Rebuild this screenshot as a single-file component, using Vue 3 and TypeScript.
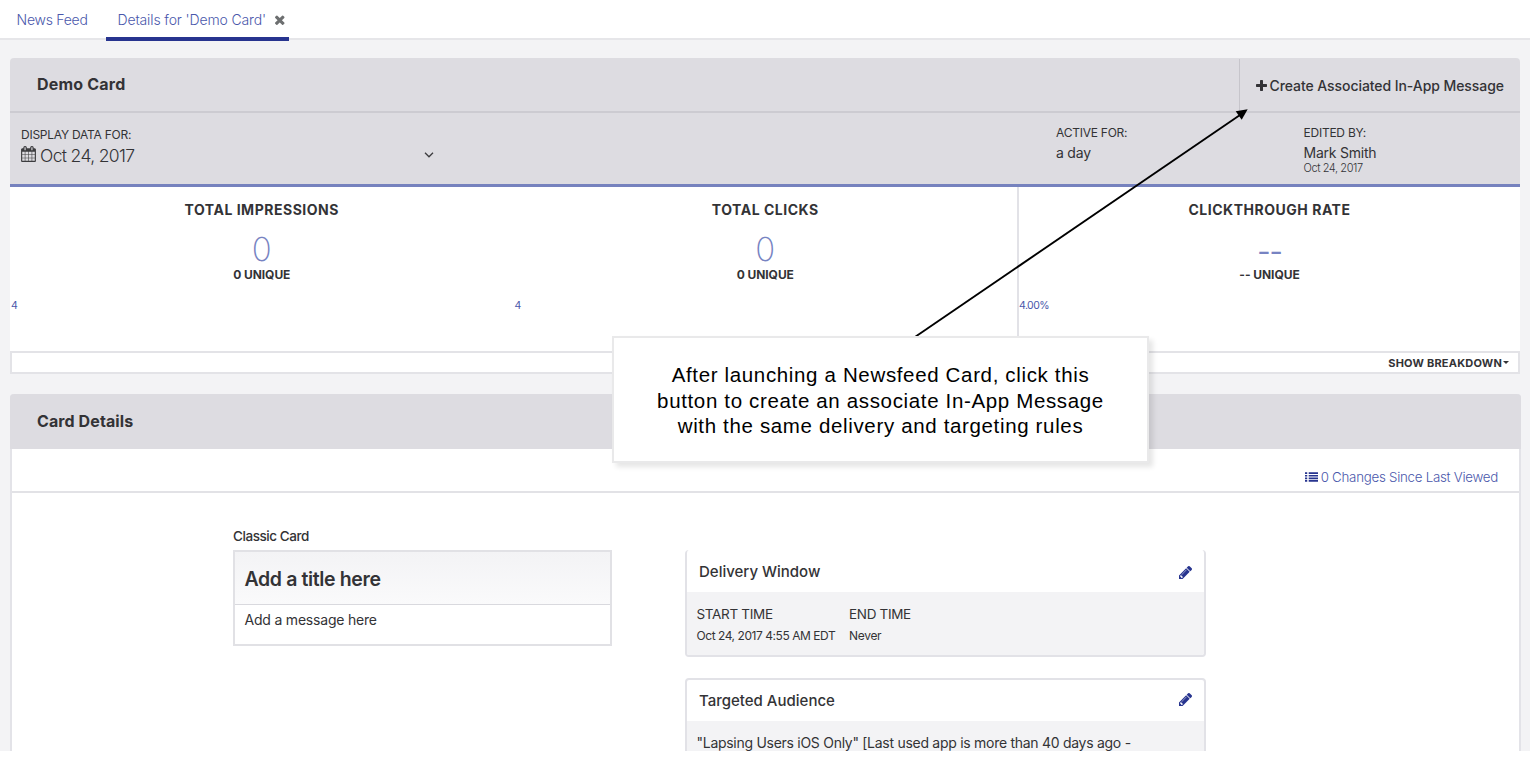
<script setup lang="ts">
interface Metric {
  title: string
  value: string
  unique: string
  axis: string
  cls: string
}

const metrics: Metric[] = [
  { title: 'TOTAL IMPRESSIONS', value: '0', unique: '0 UNIQUE', axis: '4', cls: 'impressions' },
  { title: 'TOTAL CLICKS', value: '0', unique: '0 UNIQUE', axis: '4', cls: 'clicks' },
  { title: 'CLICKTHROUGH RATE', value: '--', unique: '-- UNIQUE', axis: '4.00%', cls: 'rate' },
]

const calloutLines: string[] = [
  'After launching a Newsfeed Card, click this',
  'button to create an associate In-App Message',
  'with the same delivery and targeting rules',
]

const pencil =
  'M491 1536l91-91-235-235-91 91v107h128v128h107zm523-928q0-22-22-22-10 0-17 7l-542 542q-7 7-7 17 0 22 22 22 10 0 17-7l542-542q7-7 7-17zm-54-192l416 416-832 832h-416v-416zm683 96q0 53-37 90l-166 166-416-416 166-165q36-38 90-38 53 0 91 38l235 234q37 39 37 91z'
</script>

<template>
  <div class="page">
    <nav class="tabs">
      <a class="tab first">News Feed</a>
      <a class="tab active">
        <span>Details for 'Demo Card'</span>
        <svg class="close" viewBox="302 302 1188 1188"><path d="M1490 1322q0 40-28 68l-136 136q-28 28-68 28t-68-28l-294-294-294 294q-28 28-68 28t-68-28l-136-136q-28-28-28-68t28-68l294-294-294-294q-28-28-28-68t28-68l136-136q28-28 68-28t68 28l294 294 294-294q28-28 68-28t68 28l136 136q28 28 28 68t-28 68l-294 294 294 294q28 28 28 68z" /></svg>
      </a>
    </nav>

    <section class="panel">
      <header class="panel-head">
        <h1>Demo Card</h1>
        <button class="create">
          <svg viewBox="192 128 1408 1408"><path d="M1600 736v192q0 40-28 68t-68 28h-416v416q0 40-28 68t-68 28h-192q-40 0-68-28t-28-68v-416h-416q-40 0-68-28t-28-68v-192q0-40 28-68t68-28h416v-416q0-40 28-68t68-28h192q40 0 68 28t28 68v416h416q40 0 68 28t28 68z" /></svg>
          <span>Create Associated In-App Message</span>
        </button>
      </header>
      <div class="filters">
        <div class="range">
          <div class="label">DISPLAY DATA FOR:</div>
          <div class="range-row">
            <svg class="calendar" viewBox="64 0 1664 1792"><path d="M192 1664h288v-288h-288v288zm352 0h320v-288h-320v288zm-352-352h288v-320h-288v320zm352 0h320v-320h-320v320zm-352-384h288v-288h-288v288zm736 736h320v-288h-320v288zm-384-736h320v-288h-320v288zm768 736h288v-288h-288v288zm-384-352h320v-320h-320v320zm-352-864v-288q0-13-9.5-22.5t-22.5-9.5h-64q-13 0-22.5 9.5t-9.5 22.5v288q0 13 9.5 22.5t22.5 9.5h64q13 0 22.5-9.5t9.5-22.5zm736 864h288v-320h-288v320zm-384-384h320v-288h-320v288zm384 0h288v-288h-288v288zm32-480v-288q0-13-9.5-22.5t-22.5-9.5h-64q-13 0-22.5 9.5t-9.5 22.5v288q0 13 9.5 22.5t22.5 9.5h64q13 0 22.5-9.5t9.5-22.5zm384-64v1280q0 52-38 90t-90 38h-1408q-52 0-90-38t-38-90v-1280q0-52 38-90t90-38h128v-96q0-66 47-113t113-47h64q66 0 113 47t47 113v96h384v-96q0-66 47-113t113-47h64q66 0 113 47t47 113v96h128q52 0 90 38t38 90z" /></svg>
            <span class="date">Oct 24, 2017</span>
            <svg class="chevron" viewBox="0 0 10 6"><path d="M1 .8l4 4 4-4" /></svg>
          </div>
        </div>
        <div class="fact active-for">
          <div class="label">ACTIVE FOR:</div>
          <div class="fact-value">a day</div>
        </div>
        <div class="fact">
          <div class="label">EDITED BY:</div>
          <div class="fact-value">Mark Smith</div>
          <div class="fact-date">Oct 24, 2017</div>
        </div>
      </div>

      <div class="metrics">
        <div v-for="m in metrics" :key="m.title" class="metric" :class="m.cls">
          <div class="metric-title">{{ m.title }}</div>
          <div class="metric-value">{{ m.value }}</div>
          <div class="metric-unique">{{ m.unique }}</div>
          <div class="metric-axis">{{ m.axis }}</div>
        </div>
      </div>
      <div class="breakdown"><span>SHOW BREAKDOWN</span><i class="caret"></i></div>
    </section>

    <section class="details">
      <header class="details-head"><h2>Card Details</h2></header>
      <div class="changes">
        <svg viewBox="0 0 14 10"><path d="M0 0h2.4v1.7H0zM4 0h10v1.7H4zM0 2.8h2.4v1.7H0zM4 2.8h10v1.7H4zM0 5.6h2.4v1.7H0zM4 5.6h10v1.7H4zM0 8.3h2.4V10H0zM4 8.3h10V10H4z" /></svg>
        <span>0 Changes Since Last Viewed</span>
      </div>
      <div class="columns">
        <div class="preview">
          <div class="preview-label">Classic Card</div>
          <div class="classic">
            <div class="classic-title">Add a title here</div>
            <div class="classic-message">Add a message here</div>
          </div>
        </div>
        <div class="settings">
          <div class="box delivery">
            <div class="box-head"><h3>Delivery Window</h3><svg viewBox="128 149 1515 1515"><path :d="pencil" /></svg></div>
            <div class="box-body times">
              <div class="time start"><div class="time-label">START TIME</div><div class="time-value">Oct 24, 2017 4:55 AM EDT</div></div>
              <div class="time"><div class="time-label">END TIME</div><div class="time-value never">Never</div></div>
            </div>
          </div>
          <div class="box audience">
            <div class="box-head"><h3>Targeted Audience</h3><svg viewBox="128 149 1515 1515"><path :d="pencil" /></svg></div>
            <div class="box-body rule">"Lapsing Users iOS Only" [Last used app is more than 40 days ago -</div>
          </div>
        </div>
      </div>
    </section>
  </div>

  <svg class="arrow" viewBox="0 0 340 235">
    <path class="shaft" d="M7.500 232L334 9" />
    <path class="tip" d="M341.700 3.300L329.700 5.300L335.700 13.800Z" />
  </svg>
  <div class="callout">
    <div v-for="line in calloutLines" :key="line">{{ line }}</div>
  </div>
</template>

<style>
html,
body {
  margin: 0;
  background: #fff;
  overflow: hidden;
}
</style>

<style scoped>
* {
  box-sizing: border-box;
}
.page {
  width: 1530px;
  height: 751px;
  overflow: hidden;
  background: #f3f3f5;
  color: #333336;
  font-family: Inter, "Liberation Sans", sans-serif;
  white-space: nowrap;
}
h1, h2, h3 {
  margin: 0;
}

.tabs {
  display: flex;
  height: 40px;
  padding-left: 16.5px;
  background: #fff;
  border-bottom: 2px solid #e6e6e9;
}
.tab {
  height: 41px;
  line-height: 39px;
  font-size: 14px;
  font-weight: 300;
  color: #4a57ab;
  letter-spacing: -0.25px;
}
.tab.first {
  width: 89px;
}
.tab.active {
  display: flex;
  width: 183.5px;
  padding-left: 12px;
  border-bottom: 4px solid #27348f;
  letter-spacing: -0.13px;
}
.close {
  width: 9.5px;
  height: 9.5px;
  margin: 14.5px 0 0 9px;
  fill: #6d6f70;
  overflow: visible;
}

.panel {
  width: 1510px;
  margin: 18px 0 0 10px;
}
.panel-head {
  display: flex;
  justify-content: space-between;
  height: 55px;
  padding-left: 27px;
  background: #dddce1;
  border-bottom: 2px solid #cccbd1;
  border-radius: 4px 4px 0 0;
}
.panel-head h1 {
  line-height: 53px;
  font-size: 16px;
  font-weight: 650;
  letter-spacing: 0.2px;
}
.create {
  display: flex;
  width: 281px;
  height: 52px;
  margin-top: 1px;
  padding: 1px 0 0 15.5px;
  border: 0;
  border-left: 1px solid #c6c5cb;
  background: none;
  color: inherit;
  font: 500 14px/52px Inter, sans-serif;
  letter-spacing: -0.07px;
}
.create svg {
  width: 11px;
  height: 11px;
  margin: 19.5px 3px 0 0;
  fill: #333336;
}
.filters {
  display: flex;
  height: 74px;
  padding-left: 11px;
  background: #dddce1;
  border-bottom: 3px solid #7682be;
}
.label {
  font-size: 12px;
  line-height: 16px;
  letter-spacing: -0.24px;
}
.range {
  width: 1035px;
  padding-top: 14px;
}
.range-row {
  display: flex;
  height: 27px;
  margin-top: -1px;
}
.calendar {
  width: 15px;
  height: 16px;
  margin: 3.5px 4px 0 0;
  fill: #3c3c3f;
}
.date {
  width: 384px;
  line-height: 27px;
  font-size: 17.5px;
  font-weight: 300;
  letter-spacing: -0.65px;
}
.chevron {
  width: 10px;
  height: 6px;
  margin-top: 10px;
  fill: none;
  stroke: #3c3c3f;
  stroke-width: 1.3;
}
.fact {
  padding-top: 12px;
}
.active-for {
  width: 247.5px;
}
.fact-value {
  padding-top: 2px;
  font-size: 14px;
  line-height: 20px;
  letter-spacing: -0.22px;
}
.fact-date {
  margin-top: -1px;
  font-size: 11px;
  line-height: 12px;
  font-weight: 300;
  letter-spacing: -0.42px;
}

.metrics {
  display: grid;
  grid-template-columns: 503.5px 503.5px 503px;
  height: 164px;
  background: #fff;
}
.metric {
  padding-top: 13px;
  text-align: center;
}
.metric.rate {
  border-left: 2px solid #e2e2e7;
}
.metric-title {
  font-size: 14px;
  line-height: 20px;
  font-weight: 700;
  letter-spacing: 0.52px;
}
.metric-value {
  margin-top: 13px;
  height: 33px;
  font-size: 33px;
  line-height: 33px;
  font-weight: 250;
  color: #7783c2;
}
.rate .metric-value {
  height: 28px;
  margin-top: 18px;
  font-size: 29px;
  line-height: 28px;
  font-weight: 400;
  letter-spacing: -1px;
}
.metric-unique {
  margin-top: 1px;
  font-size: 12px;
  line-height: 16px;
  font-weight: 650;
  letter-spacing: -0.05px;
}
.metric-axis {
  margin-top: 14px;
  padding-left: 1px;
  font-size: 10.5px;
  line-height: 18px;
  letter-spacing: -0.55px;
  text-align: left;
  color: #4a57ab;
}
.rate .metric-axis {
  padding-left: 0;
}
.breakdown {
  display: flex;
  justify-content: flex-end;
  height: 23px;
  padding-right: 9px;
  background: #fff;
  border: 2px solid #e3e3e7;
  font-size: 11px;
  line-height: 20px;
  font-weight: 650;
  letter-spacing: 0.2px;
}
.caret {
  width: 0;
  height: 0;
  margin: 8px 0 0 1px;
  border: 3px solid transparent;
  border-top-color: #333336;
  border-bottom: 0;
}

.details {
  width: 1510.5px;
  height: 400px;
  margin: 20px 0 0 10px;
  background: #fff;
  border: 2px solid #e3e3e8;
  border-width: 0 2px;
  border-radius: 4px 4px 0 0;
}
.details-head {
  height: 55px;
  margin: 0 -2px;
  padding-left: 27px;
  background: #dddce1;
  border-radius: 4px 4px 0 0;
}
.details-head h2 {
  line-height: 55px;
  font-size: 16px;
  font-weight: 650;
  letter-spacing: 0.1px;
}
.changes {
  display: flex;
  justify-content: flex-end;
  height: 44px;
  padding: 18px 20.5px 0 0;
  border-bottom: 2px solid #e2e2e6;
  color: #4a57ab;
  font-size: 13.3px;
  line-height: 20px;
  font-weight: 300;
  letter-spacing: -0.26px;
}
.changes svg {
  width: 13px;
  height: 10px;
  margin: 5px 3px 0 0;
  fill: #27348f;
}
.columns {
  display: flex;
  padding-left: 221px;
}
.preview {
  width: 452px;
  padding-top: 33px;
}
.preview-label {
  font-size: 13.5px;
  line-height: 20px;
  font-weight: 500;
  letter-spacing: -0.44px;
}
.classic {
  width: 379px;
  height: 96px;
  margin-top: 4px;
  border: 2px solid #e1e1e5;
}
.classic-title {
  height: 53px;
  padding-left: 9.5px;
  background: linear-gradient(#f3f3f5, #fafafb);
  border-bottom: 1px solid #d9d9de;
  font-size: 19.5px;
  line-height: 54px;
  font-weight: 600;
  letter-spacing: -0.37px;
}
.classic-message {
  padding: 4px 0 0 9.5px;
  font-size: 14px;
  line-height: 22px;
  letter-spacing: -0.2px;
}
.settings {
  width: 521px;
  padding-top: 57px;
}
.box {
  border: 2px solid #e2e2e7;
  border-radius: 4px;
  overflow: hidden;
  background: #fff;
}
.delivery {
  height: 107px;
  border-top: 0;
}
.audience {
  height: 120px;
  margin-top: 21px;
}
.box-head {
  display: flex;
  justify-content: space-between;
  height: 42px;
  padding: 0 12px;
}
.audience .box-head {
  height: 41px;
}
.box-head h3 {
  font-size: 15px;
  line-height: 44px;
  font-weight: 500;
}
.audience .box-head h3 {
  line-height: 42px;
}
.box-head svg {
  width: 13px;
  height: 13px;
  margin-top: 15.5px;
  fill: #27348f;
}
.audience .box-head svg {
  margin-top: 13px;
}
.box-body {
  height: 100px;
  padding-left: 9.5px;
  background: #f3f3f5;
}
.times {
  display: flex;
}
.start {
  width: 152.5px;
}
.time-label {
  padding-top: 12px;
  font-size: 13.5px;
  line-height: 20px;
  letter-spacing: -0.32px;
}
.time-value {
  font-size: 12px;
  line-height: 23px;
  letter-spacing: -0.45px;
}
.time-value.never {
  letter-spacing: -0.3px;
}
.rule {
  font-size: 14px;
  line-height: 44px;
  letter-spacing: -0.28px;
}

/* annotation drawn over the page */
.arrow {
  position: absolute;
  left: 906px;
  top: 106px;
  width: 340px;
  height: 235px;
  overflow: visible;
}
.shaft {
  fill: none;
  stroke: #000;
  stroke-width: 1.9;
}
.tip {
  fill: #000;
}
.callout {
  position: absolute;
  left: 612px;
  top: 336px;
  width: 537px;
  height: 127px;
  padding-top: 24px;
  border: 2px solid #e9e9ea;
  background: #fff;
  box-shadow: 4px 4px 5px rgba(0, 0, 0, 0.1);
  color: #000;
  font: 20.5px/25.6px "Liberation Sans", Arial, sans-serif;
  letter-spacing: 0.65px;
  text-align: center;
  white-space: nowrap;
}
</style>
